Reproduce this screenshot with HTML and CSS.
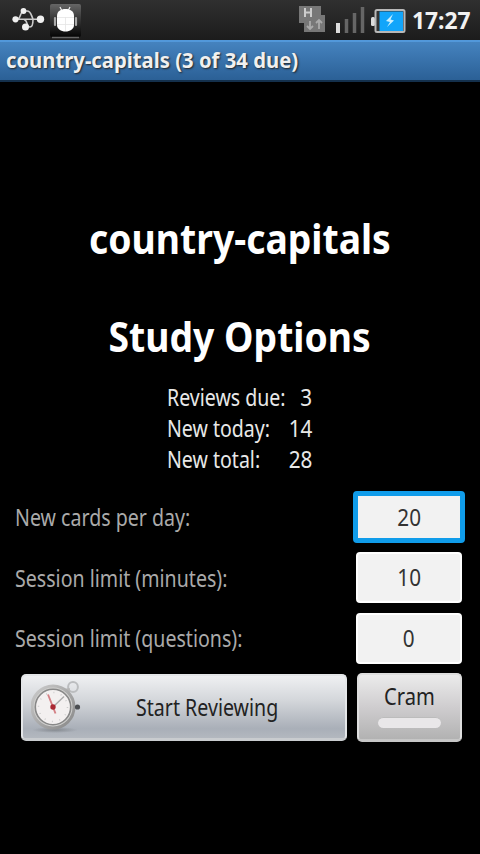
FILE: index.html
```
<!DOCTYPE html>
<html lang="en">
<head>
<meta charset="utf-8">
<title>country-capitals</title>
<link rel="stylesheet" href="styles.css">
</head>
<body>
<header class="status">
  <svg class="usb" width="34" height="26" viewBox="0 0 34 26">
    <path d="M5 13.300H28M7 13C10 12 9 5 13 5H16C20 5 20 9 22 13M13 13.500C17 14 15 21 19 21C22 21 22 17 22 13.500" fill="none" stroke="#ccc" stroke-width="1.600"/>
    <g fill="#f0f0f0"><circle cx="4.500" cy="13.300" r="3.100"/><circle cx="29.500" cy="13.300" r="3.700"/><circle cx="12.500" cy="5" r="2.900"/><circle cx="14.500" cy="21" r="3.500"/></g>
  </svg>
  <svg class="droid" width="32" height="36" viewBox="0 0 32 36">
    <defs><linearGradient id="tile" x2="0" y2="1"><stop stop-color="#666"/><stop offset=".5" stop-color="#333"/><stop offset="1" stop-color="#050505"/></linearGradient></defs>
    <rect x="0" y="1" width="31" height="33" rx="2" fill="url(#tile)"/>
    <path d="M2 34.500H29" stroke="#666" stroke-width="1.500"/>
    <path d="M10 4l2 4M20 4l-2 4" stroke="#eee" stroke-width="1.200"/>
    <path d="M7 13C7 8 11 6 15.500 6S24 8 24 13V22C24 26 20 28.500 15.500 28.500S7 26 7 22Z" fill="#fff"/>
    <path d="M5 15v7M26 15v7" stroke="#aaa" stroke-width="2.200" stroke-linecap="round"/>
    <path d="M7 14.500H24M15.500 14v14M7 21.500H24" stroke="#e4e4e4" stroke-width=".8"/>
  </svg>
  <svg class="tray" width="110" height="32" viewBox="0 0 110 32">
    <path d="M1 1H23V10H27V27H6V18H1Z" fill="#777"/>
    <path d="M7 3V12M13 3V12M7 7.500H13" stroke="#ccc" stroke-width="2" fill="none"/>
    <path d="M12 16V24M9 21l3 3 3-3M21 24V15M18 18l3-3 3 3" stroke="#aaa" stroke-width="1.800" fill="none"/>
    <rect x="38" y="18" width="4" height="10" fill="#ddd"/>
    <path d="M48.500 28V14M56.500 28V8M64.500 28V2" stroke="#666" stroke-width="3.500"/>
    <rect x="73" y="12" width="4" height="9" rx="1.500" fill="#ddd"/>
    <rect x="77.500" y="5" width="29" height="22" rx="1.500" fill="#333" stroke="#b8b8b8" stroke-width="2"/>
    <rect x="81.500" y="6.500" width="23.500" height="19.500" fill="#12a5fa"/>
    <path d="M95 9L88 16L92 17L89 22L96 15.500L92.500 14.500Z" fill="#c8efff"/>
  </svg>
  <span class="clock">17:27</span>
</header>
<div class="titlebar"><span class="title">country-capitals (3 of 34 due)</span></div>
<main>
  <h1><span class="deck">country-capitals</span></h1>
  <h1><span class="options">Study Options</span></h1>
  <dl class="stats">
    <dt><span>Reviews due:</span></dt><dd><span>3</span></dd>
    <dt><span>New today:</span></dt><dd><span>14</span></dd>
    <dt><span>New total:</span></dt><dd><span>28</span></dd>
  </dl>
  <div class="row"><span class="label">New cards per day:</span><div class="field focused"><span>20</span></div></div>
  <div class="row"><span class="label">Session limit (minutes):</span><div class="field"><span>10</span></div></div>
  <div class="row"><span class="label">Session limit (questions):</span><div class="field"><span>0</span></div></div>
  <div class="actions">
    <div class="start">
      <svg width="52" height="54" viewBox="0 0 52 54">
        <defs>
          <linearGradient id="rim" x2="1" y2="1"><stop stop-color="#ccc"/><stop offset=".5" stop-color="#aaa"/><stop offset="1" stop-color="#888"/></linearGradient>
          <radialGradient id="shade"><stop stop-color="#6d7176" stop-opacity=".6"/><stop offset="1" stop-color="#6d7176" stop-opacity="0"/></radialGradient>
        </defs>
        <ellipse cx="24" cy="50" rx="23" ry="3" fill="url(#shade)"/>
        <circle cx="42" cy="7" r="4.900" fill="none" stroke="#bbbdbf" stroke-width="2"/>
        <path d="M33 11l6-1" stroke="#b5b5b5" stroke-width="4"/>
        <circle cx="22" cy="27" r="21" fill="#d0d0ce" stroke="url(#rim)" stroke-width="3"/>
        <circle cx="22" cy="27" r="17.700" fill="#f3f0f0" stroke="#888" stroke-width="1.600"/>
        <circle cx="22" cy="27" r="14.500" fill="none" stroke="#ccc" stroke-width="1.500" stroke-dasharray="1 6.592"/>
        <path d="M22 27L33 16.500" stroke="#aaa" stroke-width="1.400"/>
        <path d="M17 14.500L22 27L24.500 33.500" stroke="#d48085" stroke-width="1.900" fill="none"/>
        <circle cx="22" cy="27" r="2.700" fill="#aa2933"/>
        <circle cx="46.500" cy="27" r="2.600" fill="#4b4e52"/>
      </svg>
      <span class="start-text">Start Reviewing</span>
    </div>
    <div class="cram"><span class="cram-text">Cram</span><i class="bar"></i></div>
  </div>
</main>
</body>
</html>
```
FILE: styles.css
```
* { box-sizing: border-box; }
body {
  margin: 0;
  width: 480px;
  height: 854px;
  overflow: hidden;
  background: #000;
  color: #fff;
  font-family: "Noto Sans", "Open Sans", sans-serif;
  font-size: 23px;
}
span { display: inline-block; white-space: nowrap; }
svg { display: block; flex: none; }
.status {
  height: 40px;
  display: flex;
  align-items: flex-start;
  background: linear-gradient(#303030, #1c1c1c);
}
.usb { margin: 6px 0 0 11px; }
.droid { margin: 3px 0 0 5px; }
.tray { margin: 5px 0 0 216px; }
.clock {
  margin-left: 4px;
  line-height: 40px;
  font-weight: 700;
  font-size: 24px;
  color: #f2f2f2;
  transform: scaleX(.95);
  transform-origin: left;
}
.titlebar {
  height: 42px;
  padding-left: 6px;
  border-top: 2px solid #5298da;
  border-bottom: 2px solid #14304c;
  background: linear-gradient(#4583bf, #2b6096);
  line-height: 35px;
}
.title {
  font-size: 22px;
  font-weight: 700;
  color: #f0f0f0;
  text-shadow: 1px 1px 2px #222;
  transform: scaleX(.921);
  transform-origin: left;
}
main { padding-top: 107px; }
h1 {
  margin: 0;
  height: 98px;
  line-height: 98px;
  font-size: 42px;
  text-align: center;
}
.deck, .options { transform: scaleX(.888); }
.stats {
  margin: -3px 0 0 167px;
  display: grid;
  grid-template-columns: 118px 27px;
  line-height: 31px;
  color: #e8e8e8;
}
dt, dd { margin: 0; height: 31px; }
dt span { transform: scaleX(.85); transform-origin: left; }
dd { display: flex; justify-content: flex-end; }
dd span { transform: scaleX(.9); transform-origin: right; }
.row {
  height: 60.5px;
  padding: 0 18px 0 15px;
  display: flex;
  justify-content: space-between;
  align-items: center;
}
.stats + .row { margin-top: 12px; }
.label { color: #aaa; transform: scaleX(.852); transform-origin: left; }
.field {
  width: 106px;
  height: 51px;
  border-radius: 4px;
  border: 2px solid #fff;
  background: #f2f2f2;
  color: #333;
  line-height: 47px;
  text-align: center;
}
.field span { transform: scaleX(.9); }
.focused {
  width: 112px;
  height: 52px;
  margin-right: -3px;
  border: 5px solid #109cea;
  line-height: 42px;
}
.actions { display: flex; padding: 4px 18px 0 21px; justify-content: space-between; }
.start {
  width: 326px;
  height: 67px;
  margin-top: 1px;
  padding-left: 8px;
  display: flex;
  align-items: center;
  border: 2px solid #e4e6e8;
  border-bottom: 3px solid #c9cccf;
  border-radius: 5px;
  background: linear-gradient(#eff0f2, #d3d6da 40%, #a9afb8 85%, #b3b8bf);
  color: #222;
}
.start-text { width: 167px; margin: 1px 0 0 53px; transform: scaleX(.852); transform-origin: left; }
.cram {
  width: 105px;
  height: 69px;
  padding-left: 25px;
  border: 2px solid #dedede;
  border-bottom: 3px solid #c6c6c6;
  border-radius: 5px;
  background: linear-gradient(#ebebeb, #cfcdcf 50%, #b2b2b2);
  color: #222;
}
.cram-text { line-height: 43px; display: block; transform: scaleX(.875); transform-origin: left; }
.bar {
  display: block;
  width: 63px;
  height: 11px;
  margin: -1px 0 0 -6px;
  border-radius: 6px;
  background: #e9e7e9;
  border-top: 1px solid #bcbcbc;
}
```
